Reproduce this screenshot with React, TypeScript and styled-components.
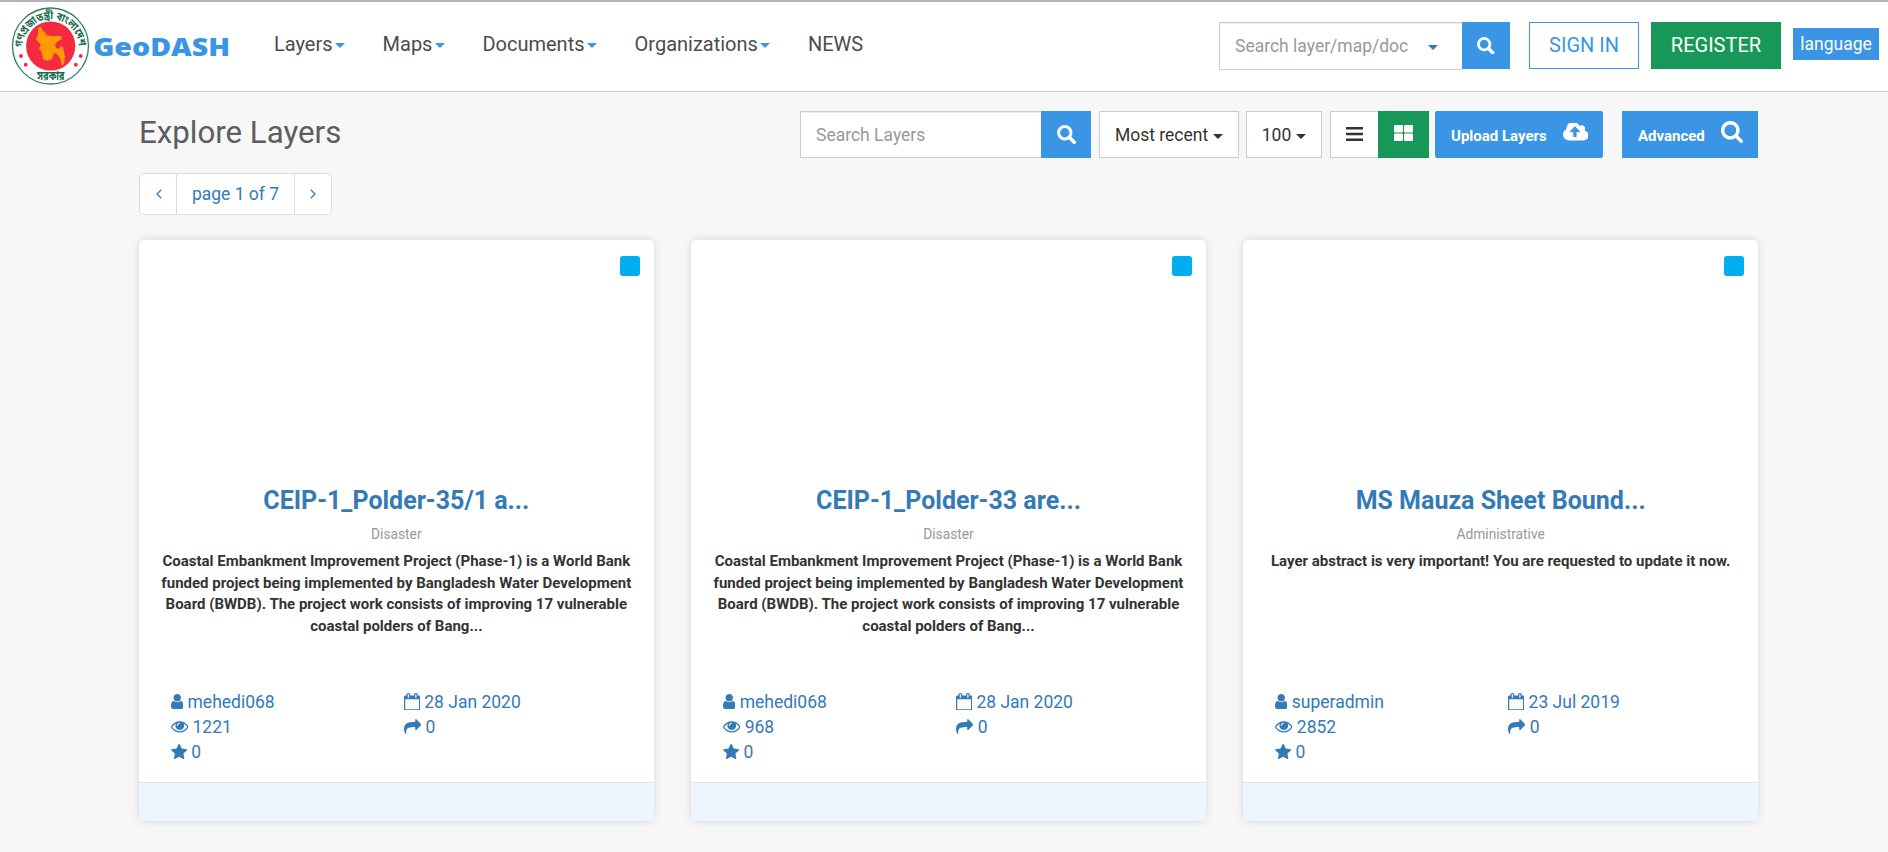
import React from 'react';
import styled, { createGlobalStyle } from 'styled-components';

const BLUE = '#3a96e4';
const GREEN = '#179758';
const LINK = '#337ab7';

const GlobalStyle = createGlobalStyle`
  *, *::before, *::after { box-sizing: border-box; }
  body {
    margin: 0;
    background: #f7f7f7;
    color: #333;
    font-family: Roboto, sans-serif;
    font-size: 17.5px;
    line-height: 25px;
    overflow: hidden;
  }
  button, input { font: inherit; margin: 0; }
`;

const Page = styled.div`
  height: 852px;
  overflow: hidden;
`;

const Header = styled.header`
  display: flex;
  align-items: flex-start;
  height: 92px;
  background: #fff;
  border-top: 2px solid #b4b3ba;
  border-bottom: 1px solid #ccc;
`;

const LogoLink = styled.a`
  display: block;
  width: 240px;
  height: 88px;
`;

const Nav = styled.nav`
  display: flex;
  flex: 1;
  padding: 27px 0 0 34px;
  gap: 37.5px;
`;

const NavItem = styled.a`
  display: flex;
  align-items: center;
  color: #4c4c4c;
  font-size: 20px;
  line-height: 30px;
`;

const Caret = styled.span<{ $color?: string; $gap?: number }>`
  display: inline-block;
  margin-left: ${p => p.$gap ?? 2.5}px;
  border: 5px solid transparent;
  border-bottom: 0;
  border-top-color: ${p => p.$color ?? '#333'};
  vertical-align: middle;
`;

const NavCaret = styled(Caret)`
  margin-top: 2px;
`;

const FieldCaret = styled(Caret)`
  margin: 2px 9px 0 0;
`;

const HeaderTools = styled.div`
  display: flex;
  padding: 20px 9px 0 0;
`;

const SearchGroup = styled.div`
  display: flex;
`;

const SearchField = styled.div<{ $width: number; $height: number }>`
  display: flex;
  align-items: center;
  width: ${p => p.$width}px;
  height: ${p => p.$height}px;
  padding: 1px 15px 0;
  background: #fff;
  border: 1px solid #ccc;
  border-right: 0;
  box-shadow: inset 0 1px 1px rgba(0, 0, 0, 0.075);
`;

const SearchInput = styled.input`
  width: 0;
  flex: 1;
  padding: 0;
  border: 0;
  outline: 0;
  background: transparent;
  color: #555;
  &::placeholder { color: #999; opacity: 1; }
`;

const SearchButton = styled.button<{ $width: number }>`
  display: flex;
  align-items: center;
  justify-content: center;
  width: ${p => p.$width}px;
  height: 47px;
  padding: 0;
  border: 0;
  background: ${BLUE};
  color: #fff;
`;

const AuthButton = styled.button<{ $solid?: boolean }>`
  height: 47px;
  width: ${p => (p.$solid ? 130 : 110)}px;
  margin-left: ${p => (p.$solid ? 12 : 19)}px;
  padding: 0;
  font-size: 20px;
  color: ${p => (p.$solid ? '#fff' : BLUE)};
  background: ${p => (p.$solid ? GREEN : '#fff')};
  border: 1px solid ${p => (p.$solid ? GREEN : BLUE)};
`;

const LanguageButton = styled.button`
  width: 86px;
  height: 32px;
  margin: 6px 0 0 12px;
  padding: 1px 0 0;
  border: 0;
  background: ${BLUE};
  color: #fff;
`;

const Main = styled.main`
  width: 1619px;
  margin-left: 139px;
`;

const TitleBar = styled.div`
  display: flex;
  justify-content: space-between;
  height: 81px;
  padding-top: 19px;
`;

const Heading = styled.h1`
  margin: 5px 0 0;
  font-size: 31.25px;
  line-height: 34px;
  font-weight: 400;
  color: #5b5d60;
`;

const Toolbar = styled.div`
  display: flex;
  height: 47px;
`;

const SelectButton = styled.button<{ $width: number; $gap: number }>`
  width: ${p => p.$width}px;
  margin-left: ${p => p.$gap}px;
  padding: 2px 0 0;
  border: 1px solid #ccc;
  background: #fff;
  color: #333;
`;

const ViewToggle = styled.div`
  display: flex;
  margin-left: 8px;
`;

const ViewButton = styled.button<{ $active?: boolean }>`
  display: flex;
  align-items: center;
  justify-content: center;
  width: ${p => (p.$active ? 51 : 48)}px;
  padding: ${p => (p.$active ? '0 1px 3px 0' : '0 0 1px')};
  border: 1px solid ${p => (p.$active ? GREEN : '#ccc')};
  border-right: 0;
  background: ${p => (p.$active ? GREEN : '#fff')};
  color: ${p => (p.$active ? '#fff' : '#333')};
`;

const ActionButton = styled.button<{ $width: number; $gap: number; $round?: boolean }>`
  display: flex;
  align-items: center;
  justify-content: space-between;
  width: ${p => p.$width}px;
  margin-left: ${p => p.$gap}px;
  padding: 0 15px 0 16px;
  border: 0;
  border-radius: ${p => (p.$round ? '2px' : '0')};
  background: ${BLUE};
  color: #fff;
  font-size: 15px;
  font-weight: 700;
  svg { margin-bottom: 5px; }
  span { padding-top: 3px; }
`;

const Pager = styled.div`
  display: flex;
  width: 193px;
  height: 42px;
  border: 1px solid #ddd;
  border-radius: 5px;
  background: #fff;
  color: ${LINK};
`;

const PagerCell = styled.a<{ $grow?: boolean }>`
  display: flex;
  align-items: center;
  justify-content: center;
  width: ${p => (p.$grow ? 'auto' : '37px')};
  flex: ${p => (p.$grow ? '1' : 'none')};
  &:first-child { width: 36px; padding-left: 2px; }
  & + & { border-left: 1px solid #ddd; }
`;

const CardGrid = styled.div`
  display: grid;
  grid-template-columns: repeat(3, 1fr);
  gap: 37.5px;
  margin-top: 25px;
`;

const Card = styled.article`
  display: flex;
  flex-direction: column;
  height: 581px;
  border-radius: 5px;
  background: #fff;
  box-shadow: 0 0 8px rgba(0, 0, 0, 0.14);
  overflow: hidden;
`;

const Thumb = styled.div`
  display: flex;
  justify-content: flex-end;
  height: 240px;
  padding: 16px 14px 0 0;
`;

const SelectBox = styled.span`
  width: 20px;
  height: 20px;
  border-radius: 3px;
  background: #00adef;
`;

const CardTitle = styled.h2`
  margin: 6px 0 0;
  text-align: center;
  color: ${LINK};
  font-size: 25px;
  line-height: 30px;
  font-weight: 700;
`;

const Category = styled.div`
  margin-top: 8px;
  text-align: center;
  color: #999;
  font-size: 13.75px;
  line-height: 20px;
`;

const Abstract = styled.p`
  height: 129px;
  margin: 7px 0 0;
  padding: 0 20px;
  text-align: center;
  font-size: 15px;
  line-height: 21.5px;
  font-weight: 700;
`;

const Stats = styled.div`
  display: grid;
  grid-template-columns: 233px 1fr;
  grid-auto-rows: 25px;
  padding: 10px 0 0 31.5px;
  color: ${LINK};
  svg { margin-bottom: 2px; }
`;

const Stat = styled.a`
  display: flex;
  align-items: center;
  gap: 4.5px;
`;

const CardFooter = styled.div`
  height: 39px;
  margin-top: auto;
  background: #edf6fd;
  border-top: 1px solid #dce8ef;
`;

type Glyph = { box: string; w: number; h: number; d: string };

const glyphs: Record<string, Glyph> = {
  user: { box: '256 128 1280 1536', w: 12.5, h: 15, d: 'M1536 1399q0 109-62.5 187t-150.5 78h-854q-88 0-150.5-78t-62.5-187q0-85 8.5-160.5t31.5-152 58.5-131 94-89 134.5-34.5q131 128 313 128t313-128q76 0 134.5 34.5t94 89 58.5 131 31.5 152 8.5 160.5zm-256-887q0 159-112.5 271.5t-271.5 112.5-271.5-112.5-112.5-271.5 112.5-271.5 271.5-112.5 271.5 112.5 112.5 271.5z' },
  eye: { box: '0 256 1792 1408', w: 17.5, h: 13.75, d: 'M1664 960q-152-236-381-353 61 104 61 225 0 185-131.5 316.5t-316.5 131.5-316.5-131.5-131.5-316.5q0-121 61-225-229 117-381 353 133 205 333.5 326.5t434.5 121.5 434.5-121.5 333.5-326.5zm-720-384q0-20-14-34t-34-14q-125 0-214.5 89.5t-89.5 214.5q0 20 14 34t34 14 34-14 14-34q0-86 61-147t147-61q20 0 34-14t14-34zm848 384q0 34-20 69-140 230-376.5 368.5t-499.5 138.5-499.5-139-376.5-368q-20-35-20-69t20-69q140-229 376.5-368t499.5-139 499.5 139 376.5 368q20 35 20 69z' },
  star: { box: '64 64 1664 1600', w: 16.25, h: 15.6, d: 'M1728 647q0 22-26 48l-363 354 86 500q1 7 1 20 0 21-10.5 35.5t-30.5 14.5q-19 0-40-12l-449-236-449 236q-22 12-40 12-21 0-31.5-14.5t-10.5-35.5q0-6 2-20l86-500-364-354q-25-27-25-48 0-37 56-46l502-73 225-455q19-41 49-41t49 41l225 455 502 73q56 9 56 46z' },
  share: { box: '0 64 1792 1600', w: 17.5, h: 15.6, d: 'M1792 640q0 26-19 45l-512 512q-19 19-45 19t-45-19-19-45v-256h-224q-98 0-175.5 6t-154 21.5-133 42.5-105.5 69.5-80 101-48.5 138.5-17.5 181q0 55 5 123 0 6 2.5 23.5t2.5 26.5q0 15-8.5 25t-23.5 10q-16 0-28-17-7-9-13-22t-13.5-30-10.5-24q-127-285-127-451 0-199 53-333 162-403 875-403h224v-256q0-26 19-45t45-19 45 19l512 512q19 19 19 45z' },
  calendar: { box: '64 0 1664 1792', w: 16.25, h: 17.5, d: 'M192 1664h1408v-1024h-1408v1024zm384-1216v-288q0-14-9-23t-23-9h-64q-14 0-23 9t-9 23v288q0 14 9 23t23 9h64q14 0 23-9t9-23zm768 0v-288q0-14-9-23t-23-9h-64q-14 0-23 9t-9 23v288q0 14 9 23t23 9h64q14 0 23-9t9-23zm384-64v1280q0 52-38 90t-90 38h-1408q-52 0-90-38t-38-90v-1280q0-52 38-90t90-38h128v-96q0-66 47-113t113-47h64q66 0 113 47t47 113v96h384v-96q0-66 47-113t113-47h64q66 0 113 47t47 113v96h128q52 0 90 38t38 90z' },
  upload: { box: '0 256 1920 1280', w: 25.5, h: 18, d: 'M1280 864q0-14-9-23l-352-352q-9-9-23-9t-23 9l-351 351q-10 12-10 24 0 14 9 23t23 9h224v352q0 13 9.5 22.5t22.5 9.5h192q13 0 22.5-9.5t9.5-22.5v-352h224q13 0 22.5-9.5t9.5-22.5zm640 288q0 159-112.5 271.5t-271.5 112.5h-1088q-185 0-316.5-131.5t-131.5-316.5q0-130 70-240t188-165q-2-30-2-43 0-212 150-362t362-150q156 0 285.5 87t188.5 231q71-62 166-62 106 0 181 75t75 181q0 76-41 138 130 31 213.5 135.5t83.5 238.5z' },
  search: { box: '64 128 1664 1664', w: 22, h: 22, d: 'M1216 832q0-185-131.5-316.5t-316.5-131.5-316.5 131.5-131.5 316.5 131.5 316.5 316.5 131.5 316.5-131.5 131.5-316.5zm512 832q0 52-38 90t-90 38q-54 0-90-38l-343-342q-179 124-399 124-143 0-273.5-55.5t-225-150-150-225-55.5-273.5 55.5-273.5 150-225 225-150 273.5-55.5 273.5 55.5 225 150 150 225 55.5 273.5q0 220-124 399l343 343q37 37 37 90z' },
};

const Icon = ({ name }: { name: string }) => {
  const g = glyphs[name];
  return (
    <svg width={g.w} height={g.h} viewBox={g.box} fill="currentColor" aria-hidden="true">
      <path d={g.d} />
    </svg>
  );
};

const Magnifier = ({ size }: { size: number }) => (
  <svg width={size} height={size} viewBox="0 0 19 19" fill="none" stroke="currentColor" aria-hidden="true">
    <circle cx="7.8" cy="7.8" r="6.2" strokeWidth="3" />
    <path d="M12.5 12.5l4.7 4.7" strokeWidth="3.6" strokeLinecap="round" />
  </svg>
);

const Logo = () => (
  <svg width="240" height="88" viewBox="0 2 240 88" role="img" aria-label="GeoDASH">
    <defs>
      <path id="arc-top" d="M22.4 47.5 A28.2 28.2 0 0 1 78.8 47.5" />
    </defs>
    <circle cx="50.5" cy="46" r="38" fill="#fff" stroke="#2c8262" strokeWidth="1.3" />
    <circle cx="50.7" cy="46" r="24.6" fill="#f42a41" />
    <path
      d="M38 28l3-1 2 4 2 1 1 3 5 1 10 0 1 3-5 3-2 3 1 3 3 1 2-3 2 1 1 5 1 5-1 7-2 2-2-8-3-4-3-1-2 6-5 2-4-2-1-6-3-5 2-3-5-6 2-4z"
      fill="#ff9a05"
    />
    <g fill="#f42a41">
      <circle cx="21" cy="56" r="1.9" />
      <circle cx="25.7" cy="64.7" r="1.9" />
      <circle cx="80.7" cy="56" r="1.9" />
      <circle cx="75.8" cy="64.7" r="1.9" />
    </g>
    <g fill="#176b4c" fontFamily="'Noto Sans Bengali', 'Noto Sans', sans-serif" fontWeight="700">
      <text fontSize="11">
        <textPath href="#arc-top" textLength="87" lengthAdjust="spacingAndGlyphs">গণপ্রজাতন্ত্রী বাংলাদেশ</textPath>
      </text>
      <text fontSize="12" x="37" y="79.5" textLength="27.5" lengthAdjust="spacingAndGlyphs">সরকার</text>
    </g>
    <text
      x="93.2"
      y="55.6"
      fill={BLUE}
      fontFamily="'Open Sans', sans-serif"
      fontWeight="800"
      fontSize="25.5"
      textLength="137"
      lengthAdjust="spacingAndGlyphs"
    >
      GeoDASH
    </text>
  </svg>
);

const menus = ['Layers', 'Maps', 'Documents', 'Organizations'];

const polderAbstract =
  'Coastal Embankment Improvement Project (Phase-1) is a World Bank funded project being implemented by Bangladesh Water Development Board (BWDB). The project work consists of improving 17 vulnerable coastal polders of Bang...';

const layers = [
  { title: 'CEIP-1_Polder-35/1 a...', category: 'Disaster', text: polderAbstract, owner: 'mehedi068', date: '28 Jan 2020', views: 1221 },
  { title: 'CEIP-1_Polder-33 are...', category: 'Disaster', text: polderAbstract, owner: 'mehedi068', date: '28 Jan 2020', views: 968 },
  { title: 'MS Mauza Sheet Bound...', category: 'Administrative', text: 'Layer abstract is very important! You are requested to update it now.', owner: 'superadmin', date: '23 Jul 2019', views: 2852 },
];

export default function App() {
  return (
    <Page>
      <GlobalStyle />
      <Header>
        <LogoLink><Logo /></LogoLink>
        <Nav>
          {menus.map(m => (
            <NavItem key={m}>{m}<NavCaret $color={BLUE} /></NavItem>
          ))}
          <NavItem>NEWS</NavItem>
        </Nav>
        <HeaderTools>
          <SearchGroup>
            <SearchField $width={243} $height={48}>
              <SearchInput placeholder="Search layer/map/doc" />
              <FieldCaret $color={LINK} />
            </SearchField>
            <SearchButton $width={48}><Magnifier size={17.5} /></SearchButton>
          </SearchGroup>
          <AuthButton>SIGN IN</AuthButton>
          <AuthButton $solid>REGISTER</AuthButton>
          <LanguageButton>language</LanguageButton>
        </HeaderTools>
      </Header>
      <Main>
        <TitleBar>
          <Heading>Explore Layers</Heading>
          <Toolbar>
            <SearchField $width={241} $height={47}>
              <SearchInput placeholder="Search Layers" />
            </SearchField>
            <SearchButton $width={50}><Magnifier size={19} /></SearchButton>
            <SelectButton $width={140} $gap={8}>Most recent<Caret $gap={5} /></SelectButton>
            <SelectButton $width={76} $gap={7}>100<Caret $gap={5} /></SelectButton>
            <ViewToggle>
              <ViewButton>
                <svg width="17" height="14" viewBox="0 0 17 14" fill="currentColor">
                  <path d="M0 0h17v2.6H0zM0 5.7h17v2.6H0zM0 11.4h17v2.6H0z" />
                </svg>
              </ViewButton>
              <ViewButton $active>
                <svg width="19" height="16" viewBox="0 0 19 16" fill="currentColor">
                  <rect width="9" height="7.5" rx="1" />
                  <rect x="10" width="9" height="7.5" rx="1" />
                  <rect y="8.5" width="9" height="7.5" rx="1" />
                  <rect x="10" y="8.5" width="9" height="7.5" rx="1" />
                </svg>
              </ViewButton>
            </ViewToggle>
            <ActionButton $width={168} $gap={6} $round><span>Upload Layers</span><Icon name="upload" /></ActionButton>
            <ActionButton $width={136} $gap={19}><span>Advanced</span><Icon name="search" /></ActionButton>
          </Toolbar>
        </TitleBar>
        <Pager>
          <PagerCell>
            <svg width="6" height="10" viewBox="0 0 6 10" fill="none" stroke="currentColor" strokeWidth="1.3"><path d="M5.2.7L1 5l4.2 4.3" /></svg>
          </PagerCell>
          <PagerCell $grow>page 1 of 7</PagerCell>
          <PagerCell>
            <svg width="6" height="10" viewBox="0 0 6 10" fill="none" stroke="currentColor" strokeWidth="1.3"><path d="M.8.7L5 5 .8 9.3" /></svg>
          </PagerCell>
        </Pager>
        <CardGrid>
          {layers.map(l => (
            <Card key={l.title}>
              <Thumb><SelectBox /></Thumb>
              <CardTitle>{l.title}</CardTitle>
              <Category>{l.category}</Category>
              <Abstract>{l.text}</Abstract>
              <Stats>
                <Stat><Icon name="user" />{l.owner}</Stat>
                <Stat><Icon name="calendar" />{l.date}</Stat>
                <Stat><Icon name="eye" />{l.views}</Stat>
                <Stat><Icon name="share" />0</Stat>
                <Stat><Icon name="star" />0</Stat>
              </Stats>
              <CardFooter />
            </Card>
          ))}
        </CardGrid>
      </Main>
    </Page>
  );
}
